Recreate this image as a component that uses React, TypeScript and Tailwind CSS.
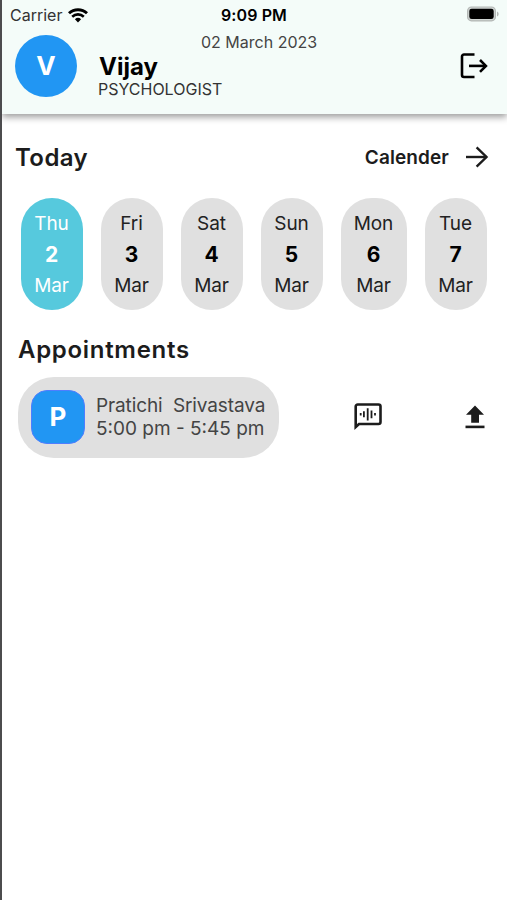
const days = [
	{ day: "Thu", date: 2, month: "Mar", width: "w-[62px]" },
	{ day: "Fri", date: 3, month: "Mar", width: "w-[62px]" },
	{ day: "Sat", date: 4, month: "Mar", width: "w-[62px]" },
	{ day: "Sun", date: 5, month: "Mar", width: "w-[62px]" },
	{ day: "Mon", date: 6, month: "Mar", width: "w-[66px]" },
	{ day: "Tue", date: 7, month: "Mar", width: "w-[62px]" },
];

const WifiIcon = () => (
	<svg width="20" height="15" viewBox="0 0 20 15" fill="none">
		<path d="M1 5.3a13 13 0 0 1 18 0" stroke="black" strokeWidth="2.9" />
		<path d="M4.2 8.7a8.5 8.5 0 0 1 11.6 0" stroke="black" strokeWidth="2.6" />
		<path d="M6.9 11.2a4.6 4.6 0 0 1 6.2 0L10 14.4z" fill="black" />
	</svg>
);

const BatteryIcon = () => (
	<svg width="33" height="16" viewBox="0 0 33 16" fill="none">
		<rect x="1" y="0.4" width="29" height="15" rx="4.5" fill="#b3b7b5" />
		<rect x="2.2" y="1.6" width="26.6" height="12.6" rx="3.4" fill="#d0d5d3" />
		<rect x="3.3" y="2.7" width="24.4" height="10.4" rx="2.4" fill="black" />
		<path d="M31 5.5c2.2 .8 2.2 4.2 0 5z" fill="#b3b7b5" />
	</svg>
);

const LogoutIcon = () => (
	<svg width="28" height="26" viewBox="0 0 28 26" fill="none" stroke="black" strokeWidth="2.6">
		<path d="M14.500 1.500H4a2 2 0 0 0-2 2v18.500a2 2 0 0 0 2 2H14.500" />
		<path d="M9 12.900H25" />
		<path d="M20 7L25.900 12.900L20 18.800" />
	</svg>
);

const ArrowIcon = () => (
	<svg width="24" height="22" viewBox="0 0 24 22" fill="none" stroke="#1c1c1c" strokeWidth="2.4">
		<path d="M1 11h20.500" />
		<path d="M11.600 1.400L21.500 11L11.600 20.600" />
	</svg>
);

const VoiceChatIcon = () => (
	<svg width="28" height="28" viewBox="0 0 28 28" fill="none" stroke="#1c1c1c">
		<path
			d="M1.700 24V3.500a2 2 0 0 1 2-2h20.800a2 2 0 0 1 2 2v15.500a2 2 0 0 1-2 2H5z"
			strokeWidth="2.6"
		/>
		<path
			d="M6.700 10.100v2.400M9.900 8.300v6M13.700 5.200v12.400M17.500 7.600v7.600M21 10.100v2.400"
			strokeWidth="1.8"
		/>
	</svg>
);

const UploadIcon = () => (
	<svg width="20" height="24" viewBox="0 0 20 24" fill="#1c1c1c">
		<path d="M10 0.500L19 9.800H14V17.800H6.200V9.800H1z" />
		<path d="M0.500 20.600H19.500V23.200H0.500z" />
	</svg>
);

const Header = () => (
	<header className="h-[114px] bg-[#f4fcf9] shadow-[0_3px_7px_rgba(0,0,0,0.4)]">
		<div className="grid h-[30px] grid-cols-3 items-center pl-2 pr-2 text-black">
			<div className="flex items-center gap-[6px]">
				<span className="text-[16px] text-[#333]">Carrier</span>
				<WifiIcon />
			</div>
			<span className="-ml-px text-center text-[16px] font-semibold tracking-[0.1px]">
				9:09 PM
			</span>
			<div className="-mt-[2px] flex justify-end">
				<BatteryIcon />
			</div>
		</div>

		<div className="flex pl-[13px] pr-[19px]">
			<div className="mt-[5px] flex size-[62px] items-center justify-center rounded-full bg-[#2196f3] pb-[2px] text-[26px] font-bold text-white">
				V
			</div>
			<div className="ml-[21px] mt-[2px] flex-1">
				<p className="pl-[103px] text-[16px] leading-5 text-[#444]">02 March 2023</p>
				<h1 className="pl-px pt-px text-[24px] font-bold leading-7 text-black">Vijay</h1>
				<p className="-mt-px text-[16px] leading-[18px] text-[#333]">PSYCHOLOGIST</p>
			</div>
			<button className="mt-[23px] self-start">
				<LogoutIcon />
			</button>
		</div>
	</header>
);

const Days = () => (
	<ul className="mt-6 flex gap-[18px] pl-[19px]">
		{days.map(({ day, date, month, width }, index) => (
			<li
				className={`${width} ${
					index === 0 ? "bg-[#56c9dd] text-white" : "bg-[#e0e0e0] text-[#222]"
				} flex h-[112px] flex-col items-center rounded-[31px] pt-[10px] pr-px text-[19px] leading-[31px] tracking-[-0.1px]`}
				key={date}
			>
				<span>{day}</span>
				<span className={`${index === 0 ? "text-white" : "text-black"} text-[21px] font-bold`}>
					{date}
				</span>
				<span>{month}</span>
			</li>
		))}
	</ul>
);

const Appointments = () => (
	<section className="pl-4">
		<h2 className="mt-6 text-[24px] font-semibold leading-8 tracking-[0.7px]">Appointments</h2>
		<div className="mt-[11px] flex items-center pr-[22px]">
			<div className="flex h-[81px] w-[261px] items-center rounded-[36px] bg-[#e0e0e0] pl-[13px]">
				<div className="mb-px flex size-[54px] items-center justify-center rounded-[16px] border border-[#4f7dff] bg-[#2196f3] pb-px text-[26px] font-bold text-white">
					P
				</div>
				<div className="-mt-px ml-[11px] whitespace-pre text-[19px] leading-[23px] text-[#444]">
					<p className="tracking-[-0.12px]">Pratichi  Srivastava</p>
					<p>5:00 pm - 5:45 pm</p>
				</div>
			</div>
			<button className="mb-px ml-[75px]">
				<VoiceChatIcon />
			</button>
			<button className="mb-[2px] ml-auto">
				<UploadIcon />
			</button>
		</div>
	</section>
);

export default function App() {
	return (
		<div className="h-[900px] w-[507px] overflow-hidden border-l-2 border-[#4c4c4e] bg-white font-['Inter',sans-serif] text-[#1c1c1c]">
			<Header />
			<main>
				<div className="mt-7 flex h-8 items-center justify-between pl-[13px] pr-[18px]">
					<h2 className="text-[24px] font-semibold tracking-[0.4px]">Today</h2>
					<button className="flex items-center gap-4 text-[19px] font-semibold tracking-[0.1px]">
						Calender
						<span className="pb-[2px]">
							<ArrowIcon />
						</span>
					</button>
				</div>
				<Days />
				<Appointments />
			</main>
		</div>
	);
}
